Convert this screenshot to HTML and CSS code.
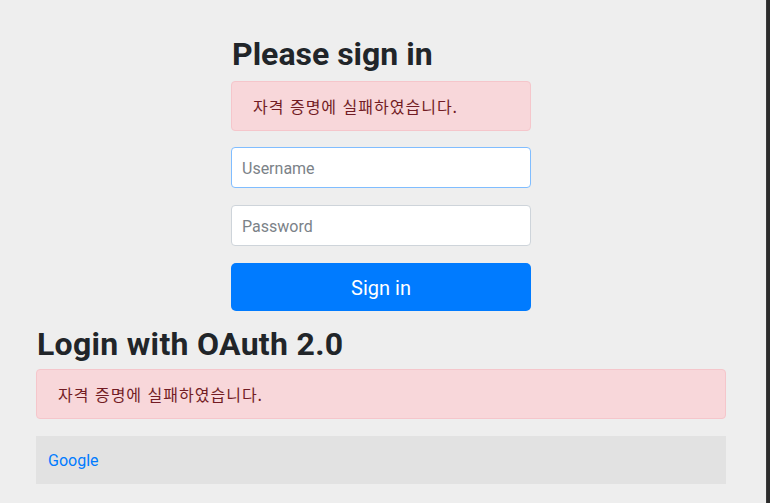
FILE: index.html
```html
<!DOCTYPE html>
<html lang="ko">
  <head>
    <meta charset="UTF-8" />
    <title>Please sign in</title>
    <link rel="stylesheet" href="styles.css">
  </head>
  <body>
    <div class="page">
      <div class="container">
        <form class="form-signin" method="post" action="/login">
          <h2 class="form-signin-heading">Please sign in</h2>
          <div class="alert alert-danger" role="alert">자격 증명에 실패하였습니다.</div>
          <p>
            <label for="username" class="sr-only">Username</label>
            <input type="text" id="username" name="username" class="form-control focused" placeholder="Username" />
          </p>
          <p>
            <label for="password" class="sr-only">Password</label>
            <input type="password" id="password" name="password" class="form-control" placeholder="Password" />
          </p>
          <button class="btn btn-primary" type="submit">Sign in</button>
        </form>
      </div>

      <div class="container wide">
        <h2 class="form-signin-heading">Login with OAuth 2.0</h2>
        <div class="alert alert-danger" role="alert">자격 증명에 실패하였습니다.</div>
        <table class="table-striped">
          <tr>
            <td><a href="/oauth2/authorization/google">Google</a></td>
          </tr>
        </table>
      </div>
    </div>
    <div class="edge"></div>
  </body>
</html>
```

FILE: styles.css
```css
html,
body {
  margin: 0;
  height: 100%;
}

body {
  background: #eeeeee;
  color: #212529;
  font-family: Roboto, "Noto Sans CJK KR", sans-serif;
  font-size: 16px;
  line-height: 1.5;
  display: flex;
  overflow: hidden;
}

.page {
  flex: 1;
  padding-right: 4px;
}

.edge {
  width: 4px;
  background: #2b2b2b;
  border-left: 1px solid #3a3a3a;
  box-sizing: border-box;
}

.container {
  box-sizing: border-box;
}

.form-signin {
  width: 300px;
  margin: 0 auto;
  padding-top: 35px;
}

.wide {
  width: 690px;
  margin: 0 auto;
}

.form-signin-heading {
  font-size: 32px;
  font-weight: 700;
  line-height: 38px;
  margin: 0 0 8px 1px;
}

.wide .form-signin-heading {
  margin: 14px 0 6px 1px;
  letter-spacing: 0.3px;
}

.alert {
  padding: 12px 20px 12px 21px;
  border: 1px solid #f5c6cb;
  border-radius: 4px;
  background: #f8d7da;
  color: #721c24;
  font-family: "Noto Sans CJK KR", sans-serif;
  font-size: 16px;
  line-height: 24px;
  letter-spacing: 1px;
  margin-bottom: 16px;
}

.wide .alert {
  margin-bottom: 17px;
}

p {
  margin: 0 0 17px;
}

.sr-only {
  position: absolute;
  width: 1px;
  height: 1px;
  overflow: hidden;
  clip: rect(0, 0, 0, 0);
}

.form-control {
  display: block;
  box-sizing: border-box;
  width: 100%;
  height: 41px;
  padding: 8px 10px 7px;
  font-family: inherit;
  font-size: 16px;
  line-height: 24px;
  color: #495057;
  background: #fff;
  border: 1px solid #ced4da;
  border-radius: 4px;
  outline: none;
}

.form-control::placeholder {
  color: #7b8288;
}

.form-control.focused {
  border-color: #80bdff;
}

.btn {
  display: block;
  width: 100%;
  height: 48px;
  padding-top: 2px;
  border: none;
  border-radius: 5px;
  font-family: inherit;
  font-size: 20px;
  cursor: pointer;
}

.btn-primary {
  background: #007bff;
  color: #fff;
}

.btn-primary:hover {
  background: #0069d9;
}

table {
  width: 100%;
  border-collapse: collapse;
}

.table-striped tr:nth-child(odd) {
  background: #e2e2e2;
}

td {
  padding: 13px 12px 11px;
  height: 48px;
  box-sizing: border-box;
}

a {
  color: #007bff;
  text-decoration: none;
}
```
